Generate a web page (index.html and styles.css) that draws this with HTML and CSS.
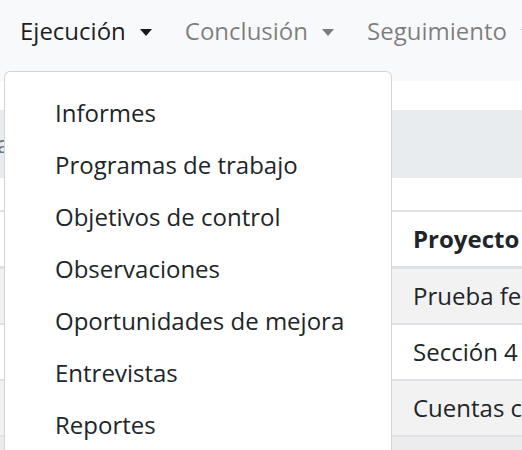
FILE: index.html
```html
<!DOCTYPE html>
<html lang="es">
<head>
<meta charset="utf-8">
<title>Ejecución</title>
<link rel="stylesheet" href="styles.css">
</head>
<body>
<nav class="navbar">
  <div class="nav-item dropdown">
    <a class="nav-link active" href="#">Ejecución<span class="caret"></span></a>
    <div class="dropdown-menu">
      <a class="dropdown-item" href="#">Informes</a>
      <a class="dropdown-item" href="#">Programas de trabajo</a>
      <a class="dropdown-item" href="#">Objetivos de control</a>
      <a class="dropdown-item" href="#">Observaciones</a>
      <a class="dropdown-item" href="#">Oportunidades de mejora</a>
      <a class="dropdown-item" href="#">Entrevistas</a>
      <a class="dropdown-item" href="#">Reportes</a>
    </div>
  </div>
  <div class="nav-item">
    <a class="nav-link" href="#">Conclusión<span class="caret"></span></a>
  </div>
  <div class="nav-item">
    <a class="nav-link" href="#">Seguimiento<span class="caret"></span></a>
  </div>
</nav>
<main class="content">
  <div class="band"><span class="band-text">a de auditoría</span></div>
  <div class="table">
    <div class="row head"><div class="cell first">Código</div><div class="cell">Proyecto</div></div>
    <div class="row striped"><div class="cell first">1</div><div class="cell">Prueba fecha</div></div>
    <div class="row"><div class="cell first">2</div><div class="cell">Sección 4</div></div>
    <div class="row striped"><div class="cell first">3</div><div class="cell">Cuentas contables</div></div>
    <div class="row hover"><div class="cell first">4</div><div class="cell">Revisión</div></div>
  </div>
</main>
</body>
</html>
```
FILE: styles.css
```css
* { box-sizing: border-box; }
html, body { margin: 0; padding: 0; }
body {
  font-family: "Open Sans", "Liberation Sans", sans-serif;
  font-size: 24px;
  line-height: 36px;
  color: #212529;
  background: #fff;
  width: 522px;
  height: 450px;
  overflow: hidden;
}
a { text-decoration: none; }
.navbar {
  display: flex;
  align-items: flex-start;
  height: 81px;
  padding: 13px 0 0 20px;
  background: #f8f9fa;
  white-space: nowrap;
}
.nav-item { flex: none; margin-right: 33px; }
.nav-link { color: rgba(0,0,0,.5); display: inline-flex; align-items: center; }
.nav-link.active { color: rgba(0,0,0,.9); }
.caret {
  display: inline-block;
  margin-left: 14px;
  margin-top: 2px;
  border-top: 7px solid currentColor;
  border-left: 6.5px solid transparent;
  border-right: 6.5px solid transparent;
}
.dropdown-menu {
  position: absolute;
  top: 71px;
  left: 4px;
  width: 388px;
  padding: 15px 0 20px;
  background: #fff;
  border: 1.5px solid rgba(0,0,0,.17);
  border-radius: 6px;
  z-index: 10;
  display: flex;
  flex-direction: column;
}
.dropdown-item {
  display: block;
  padding: 8px 0 8px 50px;
  color: #212529;
}
.content { padding-top: 29px; }
.band {
  height: 68px;
  background: #e9ecef;
  padding-top: 16px;
  color: #6c757d;
}
.band-text { display: block; margin-left: -3px; }
.table { margin-top: 32px; border-top: 2px solid #dee2e6; }
.row { display: flex; border-bottom: 2px solid #dee2e6; }
.row.head { font-weight: 700; border-bottom-width: 3px; }
.row.striped { background: #f2f2f2; }
.row.hover { background: #ececec; }
.cell { flex: none; padding: 9px 0 9px 13px; white-space: nowrap; }
.cell.first { width: 400px; }
```
